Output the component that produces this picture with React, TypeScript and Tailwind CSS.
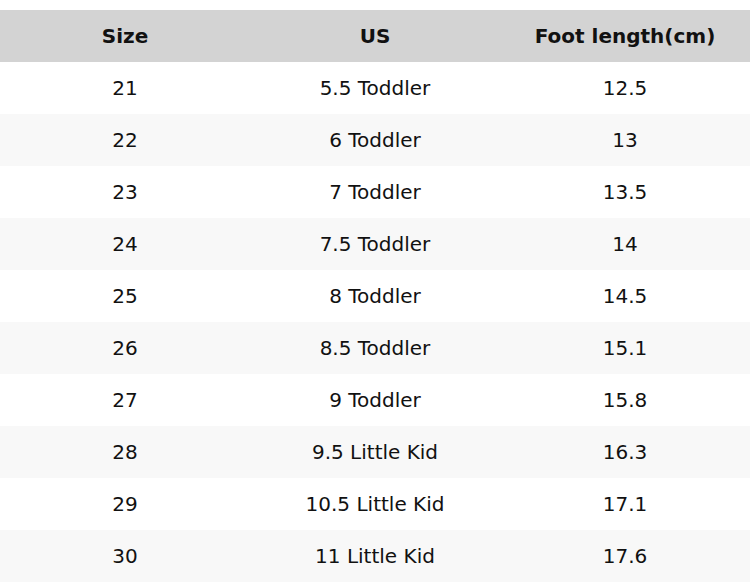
const rows = [
  ['21', '5.5 Toddler', '12.5'],
  ['22', '6 Toddler', '13'],
  ['23', '7 Toddler', '13.5'],
  ['24', '7.5 Toddler', '14'],
  ['25', '8 Toddler', '14.5'],
  ['26', '8.5 Toddler', '15.1'],
  ['27', '9 Toddler', '15.8'],
  ['28', '9.5 Little Kid', '16.3'],
  ['29', '10.5 Little Kid', '17.1'],
  ['30', '11 Little Kid', '17.6'],
];

export default function App() {
  return (
    <div className="w-[750px] h-[582px] bg-white pt-[10px] text-[20px] text-[#111] font-['DejaVu_Sans',sans-serif] overflow-hidden">
      <table className="w-full border-collapse table-fixed">
        <thead>
          <tr className="bg-[#d3d3d3] h-[52px]">
            <th className="font-bold text-center p-0">Size</th>
            <th className="font-bold text-center p-0">US</th>
            <th className="font-bold text-center p-0">Foot length(cm)</th>
          </tr>
        </thead>
        <tbody>
          {rows.map((r, i) => (
            <tr key={r[0]} className={`h-[52px] ${i % 2 === 1 ? 'bg-[#f8f8f8]' : 'bg-white'}`}>
              {r.map((c, j) => (
                <td key={j} className="text-center p-0">{c}</td>
              ))}
            </tr>
          ))}
        </tbody>
      </table>
    </div>
  );
}
